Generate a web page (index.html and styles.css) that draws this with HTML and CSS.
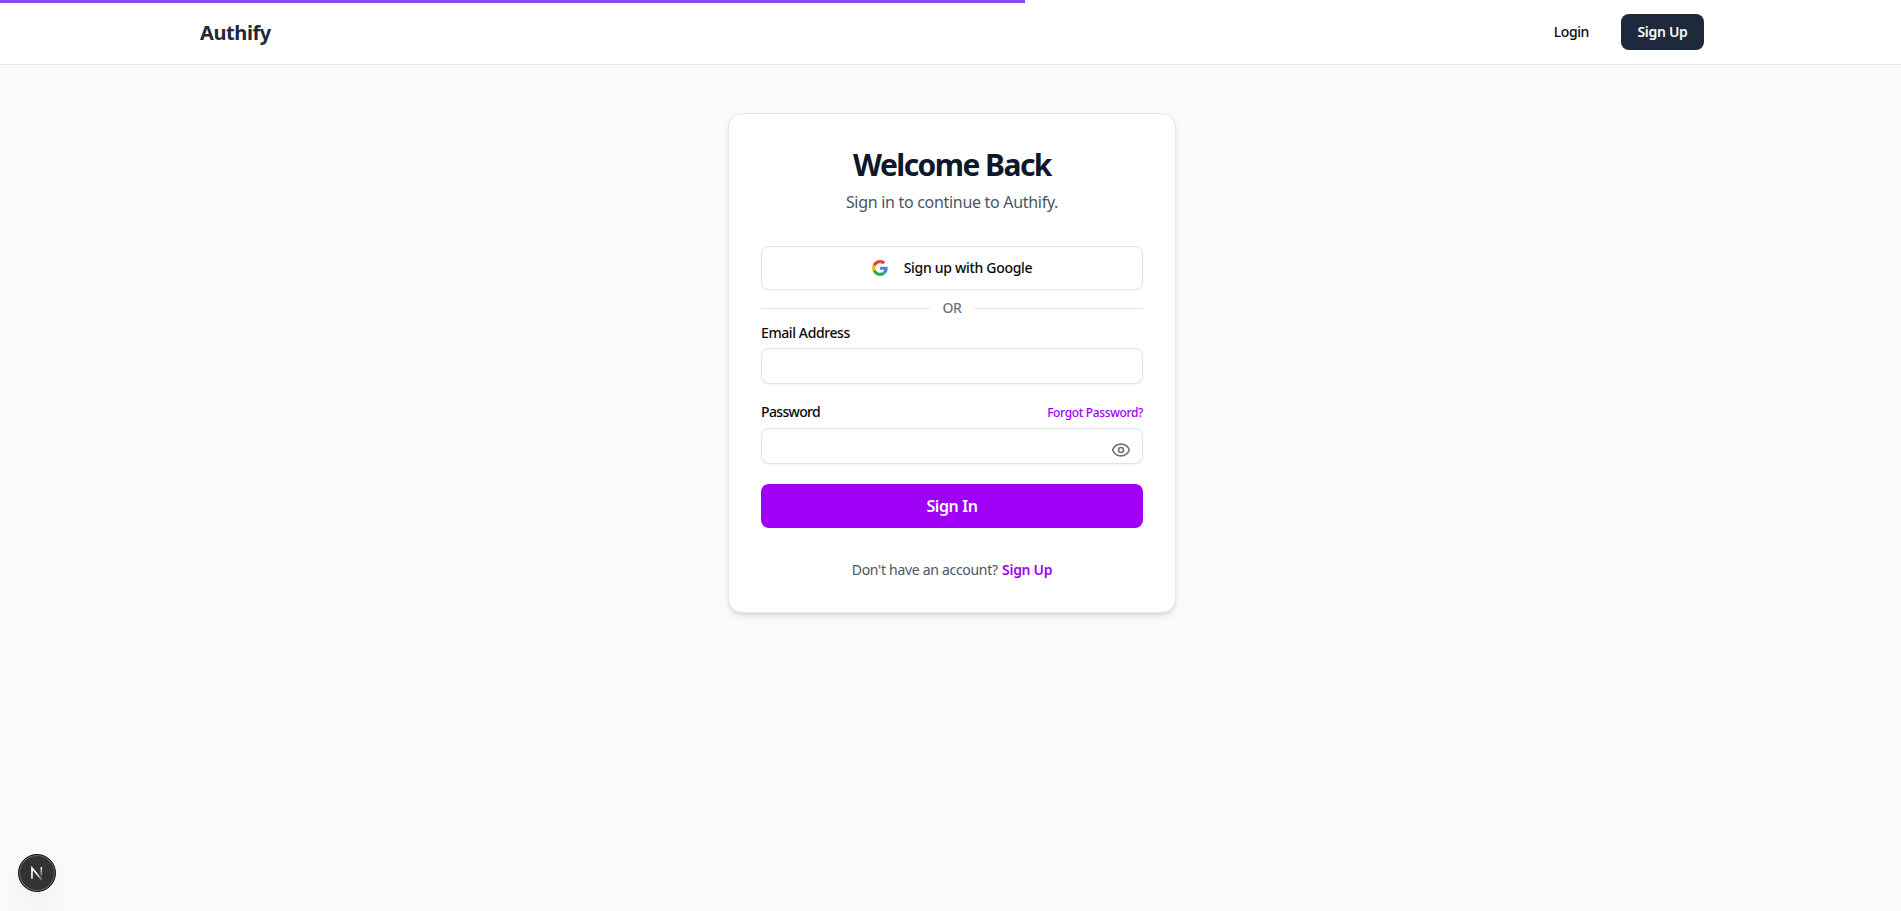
FILE: index.html
```html
<!DOCTYPE html>
<html lang="en">
<head>
<meta charset="utf-8">
<title>Authify</title>
<link rel="stylesheet" href="styles.css">
</head>
<body>
<div class="progress"></div>
<header class="site-header">
  <div class="container">
    <a class="brand">Authify</a>
    <nav class="nav">
      <a class="nav-login">Login</a>
      <a class="nav-signup">Sign Up</a>
    </nav>
  </div>
</header>
<main class="page">
  <section class="card">
    <h1 class="title">Welcome Back</h1>
    <p class="subtitle">Sign in to continue to Authify.</p>
    <button class="google" type="button">
      <svg class="google-icon" viewBox="0 0 48 48"><path fill="#EA4335" d="M24 9.5c3.54 0 6.71 1.22 9.21 3.6l6.85-6.85C35.9 2.38 30.47 0 24 0 14.62 0 6.51 5.38 2.56 13.22l7.98 6.19C12.43 13.72 17.74 9.5 24 9.5z"/><path fill="#4285F4" d="M46.98 24.55c0-1.57-.15-3.09-.38-4.55H24v9.02h12.94c-.58 2.96-2.26 5.48-4.78 7.18l7.73 6c4.51-4.18 7.09-10.36 7.09-17.65z"/><path fill="#FBBC05" d="M10.53 28.59c-.48-1.45-.76-2.99-.76-4.59s.27-3.14.76-4.59l-7.98-6.19C.92 16.46 0 20.12 0 24c0 3.88.92 7.54 2.56 10.78l7.97-6.19z"/><path fill="#34A853" d="M24 48c6.48 0 11.93-2.13 15.89-5.81l-7.73-6c-2.15 1.45-4.92 2.3-8.16 2.3-6.26 0-11.57-4.22-13.47-9.91l-7.98 6.19C6.51 42.62 14.62 48 24 48z"/></svg>
      <span>Sign up with Google</span>
    </button>
    <div class="divider"><span>OR</span></div>
    <form class="form">
      <label class="label" for="email">Email Address</label>
      <input class="input" id="email" type="email">
      <div class="label-row">
        <label class="label label-password" for="password">Password</label>
        <a class="forgot">Forgot Password?</a>
      </div>
      <div class="password">
        <input class="input" id="password" type="password">
        <svg class="eye" viewBox="0 0 24 24"><path d="M2.062 12.348a1 1 0 0 1 0-.696 10.75 10.75 0 0 1 19.876 0 1 1 0 0 1 0 .696 10.75 10.75 0 0 1-19.876 0"/><circle cx="12" cy="12" r="3"/></svg>
      </div>
      <button class="submit" type="button">Sign In</button>
    </form>
    <p class="footer">Don't have an account? <a class="footer-link">Sign Up</a></p>
  </section>
</main>
<div class="dev-badge">
  <svg viewBox="0 0 40 40"><defs><linearGradient id="stem" x1="0" y1="0" x2="0" y2="1"><stop offset="0" stop-color="#fff"/><stop offset="1" stop-color="#fff" stop-opacity="0"/></linearGradient><linearGradient id="diag" gradientUnits="userSpaceOnUse" x1="20" y1="20" x2="26" y2="28"><stop offset="0" stop-color="#fff"/><stop offset="1" stop-color="#fff" stop-opacity=".2"/></linearGradient></defs><path d="M14.4 26.5V14.4L25.2 27.5" fill="none" stroke="url(#diag)" stroke-width="1.8"/><rect x="23.9" y="13.5" width="1.8" height="12" fill="url(#stem)"/></svg>
</div>
</body>
</html>
```
FILE: styles.css
```css
* { box-sizing: border-box; }
html { overflow: hidden; }
body { margin: 0; min-height: 100vh; background: #f9fafb; color: #0a0a0a; font-family: "Segoe UI", "Noto Sans", sans-serif; font-size: 14px; line-height: 20px; letter-spacing: -0.3px; }
h1, p { margin: 0; }
button, input { font: inherit; letter-spacing: inherit; }
.progress { position: absolute; top: 0; left: 0; width: 1025px; height: 3px; background: #9147f5; }
.site-header { height: 65px; background: #fff; border-bottom: 1px solid #e5e7eb; }
.container { display: flex; align-items: center; justify-content: space-between; width: 1504px; height: 64px; margin-left: 200px; }
.brand { padding-top: 2px; color: #1e293b; font-size: 20px; line-height: 28px; font-weight: 700; letter-spacing: -0.4px; }
.nav { display: flex; align-items: center; gap: 16px; }
.nav-login { padding: 8px 16px; font-weight: 550; letter-spacing: -0.38px; }
.nav-signup { display: flex; align-items: center; justify-content: center; width: 83px; height: 36px; border-radius: 8px; background: #1e293b; color: #fafafa; font-weight: 600; }
.page { padding: 48px 0 0 728px; }
.card { width: 448px; height: 500px; padding: 32px; background: #fff; border: 1px solid #e5e7eb; border-radius: 14px; box-shadow: 0 4px 6px -1px rgba(0,0,0,.1), 0 2px 4px -2px rgba(0,0,0,.1); }
.title { padding-top: 1px; color: #0f172a; text-align: center; font-size: 30px; line-height: 36px; font-weight: 700; letter-spacing: -1.55px; }
.subtitle { margin-top: 7px; color: #4b5563; text-align: center; font-size: 16px; line-height: 24px; }
.google { display: flex; align-items: center; justify-content: center; gap: 16px; width: 100%; height: 44px; margin-top: 32px; padding: 0; background: #fff; border: 1px solid #e5e5e5; border-radius: 8px; box-shadow: 0 1px 2px rgba(0,0,0,.05); color: #0a0a0a; font-weight: 550; }
.google-icon { width: 16px; height: 16px; }
.divider { display: flex; align-items: center; gap: 12px; height: 20px; margin-top: 8px; color: #6b7280; font-weight: 500; }
.divider::before, .divider::after { content: ""; flex: 1; height: 1px; background: #e5e5e5; }
.label { display: block; font-weight: 550; letter-spacing: -0.4px; }
.label-password { letter-spacing: -0.65px; }
.form { margin-top: 5px; }
.input { display: block; width: 100%; height: 36px; padding: 4px 12px; background: #fff; border: 1px solid #e5e5e5; border-radius: 8px; box-shadow: 0 1px 2px rgba(0,0,0,.05); }
.form > .input { margin-top: 5px; }
.label-row { display: flex; align-items: center; justify-content: space-between; height: 20px; margin-top: 18px; }
.forgot { padding-top: 1px; color: #9f00f5; font-size: 12px; font-weight: 550; letter-spacing: -0.36px; }
.password { position: relative; margin-top: 6px; }
.eye { position: absolute; right: 12px; top: 12px; width: 20px; height: 20px; fill: none; stroke: #6b7280; stroke-width: 2; stroke-linecap: round; stroke-linejoin: round; }
.submit { display: block; width: 100%; height: 44px; margin-top: 20px; padding: 0; border: 0; border-radius: 8px; background: #9f00f5; color: #fafafa; font-size: 16px; font-weight: 600; letter-spacing: -0.4px; }
.footer { margin-top: 32px; color: #4b5563; text-align: center; }
.footer-link { margin-left: 1px; color: #9f00f5; font-weight: 600; }
.dev-badge { position: absolute; left: 18px; top: 854px; width: 38px; height: 38px; border-radius: 50%; background: #333; border: 1px solid #111; box-shadow: inset 0 0 0 1px #6b6b6b, 0 16px 32px -8px rgba(0,0,0,.12); }
.dev-badge svg { display: block; width: 36px; height: 36px; }
```
